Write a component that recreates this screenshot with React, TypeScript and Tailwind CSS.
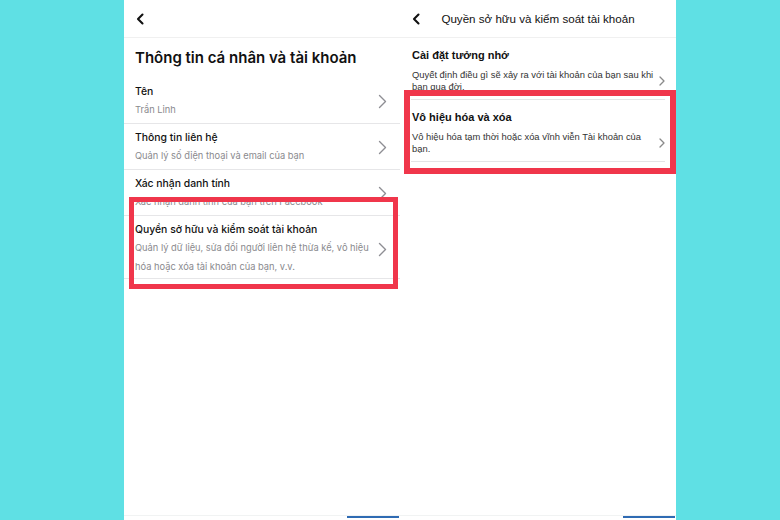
import React from "react";

const BackChevron = () => (
  <svg width="8" height="12" viewBox="0 0 8 12" fill="none">
    <path d="M6.5 1.5 L2 6 L6.5 10.5" stroke="#111" strokeWidth="2.1" strokeLinecap="round" strokeLinejoin="round" />
  </svg>
);

const RowChevron = () => (
  <svg width="9" height="15" viewBox="0 0 9 15" fill="none">
    <path d="M1.5 1.5 L7.5 7.5 L1.5 13.5" stroke="#8e8e93" strokeWidth="1.4" strokeLinecap="round" strokeLinejoin="round" />
  </svg>
);

const SmallChevron = () => (
  <svg width="6" height="10" viewBox="0 0 6 10" fill="none">
    <path d="M1 1 L5 5 L1 9" stroke="#8a8a8a" strokeWidth="1.3" strokeLinecap="round" strokeLinejoin="round" />
  </svg>
);

type LeftRowProps = { title: string; lines: string[]; pb?: string };

const LeftRow = ({ title, lines, pb = "pb-[4px]" }: LeftRowProps) => (
  <div className={`flex items-center pl-[11px] pr-[13px] pt-[6px] ${pb} border-b border-[#e6e6e8]`}>
    <div className="flex-1 min-w-0">
      <div className="text-[10.4px] leading-[16px] font-medium text-[#111]">{title}</div>
      {lines.map((l) => (
        <div key={l} className="text-[9.3px] leading-[19px] text-[#8a8a8e] whitespace-nowrap">
          {l}
        </div>
      ))}
    </div>
    <RowChevron />
  </div>
);

type RightRowProps = { title: string; lines: string[] };

const RightRow = ({ title, lines }: RightRowProps) => (
  <div className="mx-[11px] pl-[1px] pt-[10px] pb-[6px] border-b border-[#e4e4e6]">
    <div className="text-[11px] leading-[14px] font-bold text-[#111]">{title}</div>
    <div className="mt-[7px] flex items-center">
      <div className="flex-1 min-w-0">
        {lines.map((l) => (
          <div key={l} className="text-[9.4px] leading-[12px] text-[#333] whitespace-nowrap">
            {l}
          </div>
        ))}
      </div>
      <div className="w-[8px] flex justify-end">
        <SmallChevron />
      </div>
    </div>
  </div>
);

const Footer = () => (
  <div className="mt-auto h-[5px] flex flex-col">
    <div className="h-[1px] bg-[#f1f3f3]" />
    <div className="flex justify-end pr-[1px]">
      <div className="w-[52px] h-[2px] bg-[#2f6bb3]" />
    </div>
  </div>
);

export default function App() {
  return (
    <div
      className="w-[780px] h-[520px] bg-[#5fe0e4] flex pl-[124px]"
      style={{ fontFamily: "Inter, 'Liberation Sans', sans-serif" }}
    >
      {/* Left panel */}
      <div className="relative w-[276px] h-full bg-white flex flex-col">
        <div className="h-[38px] flex items-center border-b border-[#f0f0f0]">
          <div className="pl-[12px] pt-[1px]">
            <BackChevron />
          </div>
        </div>
        <div className="pl-[11px] pt-[10px] pb-[10px] text-[15px] leading-[20px] font-semibold text-[#111]">
          Thông tin cá nhân và tài khoản
        </div>
        <LeftRow title="Tên" lines={["Trần Linh"]} />
        <LeftRow title="Thông tin liên hệ" lines={["Quản lý số điện thoại và email của bạn"]} />
        <LeftRow title="Xác nhận danh tính" lines={["Xác nhận danh tính của bạn trên Facebook"]} />
        <LeftRow
          title="Quyền sở hữu và kiểm soát tài khoản"
          lines={["Quản lý dữ liệu, sửa đổi người liên hệ thừa kế, vô hiệu", "hóa hoặc xóa tài khoản của bạn, v.v."]}
          pb="pb-[2px]"
        />
        <Footer />
        <div className="absolute left-[5px] top-[197px] w-[269px] h-[92px] border-[5px] border-[#f0364b]" />
      </div>

      {/* Right panel */}
      <div
        className="relative w-[276px] h-full bg-white flex flex-col"
        style={{ fontFamily: "'Liberation Sans', Arial, sans-serif" }}
      >
        <div className="h-[38px] grid grid-cols-[36px_1fr_36px] items-center border-b border-[#f0f0f0]">
          <div className="pl-[12px] pt-[1px]">
            <BackChevron />
          </div>
          <div className="text-center text-[11.6px] leading-[16px] text-[#111] whitespace-nowrap">
            Quyền sở hữu và kiểm soát tài khoản
          </div>
          <div />
        </div>
        <RightRow
          title="Cài đặt tưởng nhớ"
          lines={["Quyết định điều gì sẽ xảy ra với tài khoản của bạn sau khi", "bạn qua đời."]}
        />
        <RightRow
          title="Vô hiệu hóa và xóa"
          lines={["Vô hiệu hóa tạm thời hoặc xóa vĩnh viễn Tài khoản của", "bạn."]}
        />
        <Footer />
        <div className="absolute left-[4px] top-[90px] w-[272px] h-[84px] border-[6px] border-[#f0364b]" />
      </div>
    </div>
  );
}
